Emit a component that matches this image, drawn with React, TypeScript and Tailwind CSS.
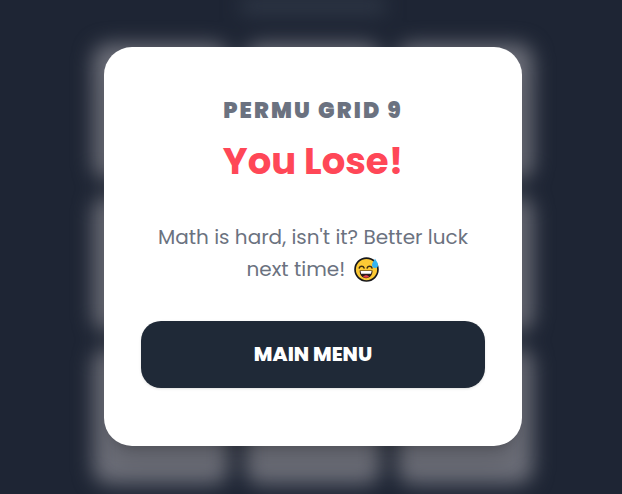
function SweatSmile() {
  return (
    <svg viewBox="0 0 24 24" className="ml-1 inline-block h-[25px] w-[25px] align-[-6px]" role="img" aria-label="Grinning face with sweat">
      <circle cx="12" cy="12" r="11" fill="#fcc935" stroke="#18181b" strokeWidth="1.6" />
      <path d="M5 10.600c.8-2.400 3.900-2.400 4.700 0M12.600 10.600c.8-2.400 3.900-2.400 4.700 0" fill="none" stroke="#3b2a12" strokeWidth="1.4" strokeLinecap="round" />
      <path d="M5.400 13h12.400c0 4.500-2.500 7.300-6.200 7.300S5.400 17.500 5.400 13z" fill="#2b1b1d" />
      <path d="M6.300 13.500h10.600l-.5 2.500H6.800z" fill="#fff" />
      <path d="M8.600 18.900c1.500-2 4.500-2 6 0-1.600 1.300-4.400 1.300-6 0z" fill="#e8404a" />
      <path d="M20.200 1.600c1.800 2.700 2.900 4.500 2.900 6.100a2.900 2.900 0 0 1-5.800 0c0-1.600 1.100-3.400 2.900-6.100z" fill="#35b4f1" />
    </svg>
  );
}

function Board() {
  const cells = [1, 2, 3, 4, 5, 6, 7, 8, 9];

  return (
    <div className="absolute inset-x-0 top-0 flex flex-col items-center pl-1 blur-[10px]" aria-hidden="true">
      <div className="h-3 w-36 bg-[#353e4d]" />
      <div className="mt-8 grid w-full max-w-[440px] grid-cols-3 gap-4">
        {cells.map((cell) => (
          <div key={cell} className="h-[136px] rounded-2xl bg-[#6d6f79]" />
        ))}
      </div>
    </div>
  );
}

export default function App() {
  return (
    <main className="relative min-h-screen overflow-hidden bg-[#1e2534] font-['Poppins','Inter',sans-serif]">
      <Board />

      {/* Result dialog */}
      <div className="relative flex min-h-screen items-center justify-center pb-0.5 pl-1">
        <section
          role="dialog"
          aria-labelledby="result-title"
          className="w-full max-w-[418px] rounded-[28px] bg-white px-[37px] pt-12 pb-[58px] text-center shadow-xl shadow-black/15"
        >
          <p className="text-[22px] leading-8 font-black tracking-widest text-[#6b7280]">PERMU GRID 9</p>
          <h1 id="result-title" className="mt-3 text-[37px] leading-11 font-bold text-[#ff4757]">
            You Lose!
          </h1>
          <p className="mt-[38px] text-xl leading-8 text-[#6b7280]">
            Math is hard, isn't it? Better luck next time! <SweatSmile />
          </p>
          <button
            type="button"
            className="mt-9 h-[67px] w-full rounded-[20px] bg-[#1f2937] text-xl font-extrabold text-white shadow-sm"
          >
            MAIN MENU
          </button>
        </section>
      </div>
    </main>
  );
}
